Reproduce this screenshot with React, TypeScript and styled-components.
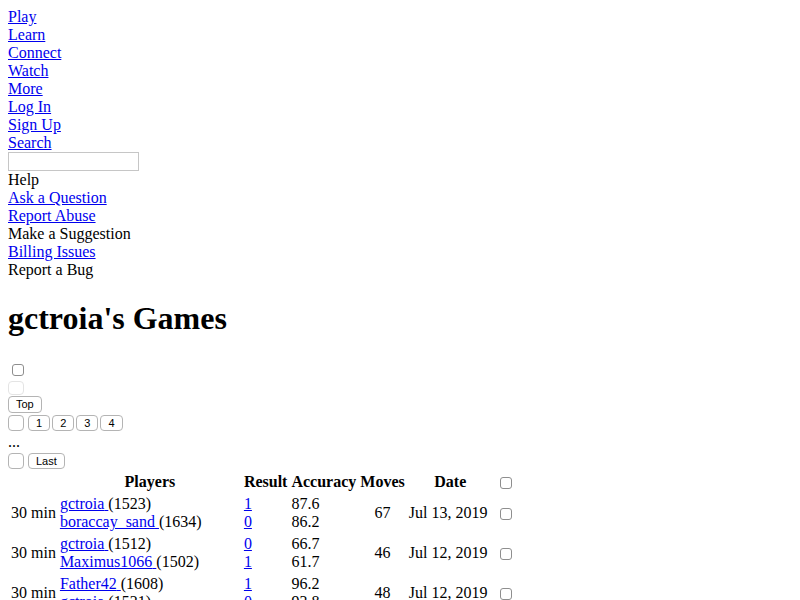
import React from "react";
import styled, { createGlobalStyle } from "styled-components";

const Global = createGlobalStyle`
  body {
    margin: 8px;
    font-family: "Liberation Serif", "Times New Roman", serif;
    font-size: 16px;
    color: #000;
    background: #fff;
  }
`;

const NavLink = styled.a`
  display: block;
  color: #0000ee;
  text-decoration: underline;
`;

const Line = styled.div``;

const SearchInput = styled.input`
  display: block;
  box-sizing: border-box;
  width: 131px;
  height: 19px;
  margin: 0;
  padding: 1px 2px;
  border: 1px solid #c6c6c6;
  background: #fff;
  outline: none;
`;

const Title = styled.h1`
  font-size: 32px;
  font-weight: bold;
  margin: 21px 0 21px;
`;

const Check = styled.input.attrs({ type: "checkbox" })`
  appearance: none;
  -webkit-appearance: none;
  box-sizing: border-box;
  width: 12px;
  height: 12px;
  margin: 0 3px 0 4px;
  border: 1px solid #8e8e8e;
  border-radius: 3px;
  background: #fff;
  vertical-align: middle;
`;

const Btn = styled.button<{ $empty?: boolean; $disabled?: boolean; $h?: number }>`
  box-sizing: border-box;
  font-family: "Liberation Sans", Arial, sans-serif;
  font-size: 11px;
  line-height: 13px;
  height: ${(p) => p.$h ?? 17}px;
  width: ${(p) => (p.$empty ? "16px" : "auto")};
  padding: ${(p) => (p.$empty ? "0" : "0 7px")};
  margin: 0;
  border: 1px solid ${(p) => (p.$disabled ? "#e4e4e4" : "#b4b4b4")};
  border-radius: 4px;
  background: #fff;
  color: #000;
`;

const Row = styled.div<{ $h: number; $top: number }>`
  display: flex;
  align-items: flex-start;
  box-sizing: border-box;
  height: ${(p) => p.$h}px;
  padding-top: ${(p) => p.$top}px;
  gap: 4px;
`;

const PageGroup = styled.div`
  display: flex;
  gap: 2px;
`;

const Table = styled.table`
  border-spacing: 2px;
  font-size: 16px;
`;

const Th = styled.th<{ $w?: number }>`
  padding: 1px;
  text-align: center;
  font-weight: bold;
  ${(p) => (p.$w ? `width: ${p.$w}px;` : "")}
`;

const Td = styled.td<{ $center?: boolean }>`
  padding: 1px;
  vertical-align: middle;
  text-align: ${(p) => (p.$center ? "center" : "left")};
  white-space: nowrap;
`;

const A = styled.a`
  color: #0000ee;
  text-decoration: underline;
`;

const navItems = ["Play", "Learn", "Connect", "Watch", "More", "Log In", "Sign Up", "Search"];

type Game = {
  p: [string, string, string, string];
  r: [string, string];
  acc: [string, string];
  moves: string;
  date: string;
};

const games: Game[] = [
  { p: ["gctroia", "1523", "boraccay_sand", "1634"], r: ["1", "0"], acc: ["87.6", "86.2"], moves: "67", date: "Jul 13, 2019" },
  { p: ["gctroia", "1512", "Maximus1066", "1502"], r: ["0", "1"], acc: ["66.7", "61.7"], moves: "46", date: "Jul 12, 2019" },
  { p: ["Father42", "1608", "gctroia", "1521"], r: ["1", "0"], acc: ["96.2", "93.8"], moves: "48", date: "Jul 12, 2019" },
];

export default function App() {
  return (
    <>
      <Global />
      {navItems.map((n) => (
        <NavLink key={n} href="#">
          {n}
        </NavLink>
      ))}
      <SearchInput type="text" />
      <Line>Help</Line>
      <NavLink href="#">Ask a Question</NavLink>
      <NavLink href="#">Report Abuse</NavLink>
      <Line>Make a Suggestion</Line>
      <NavLink href="#">Billing Issues</NavLink>
      <Line>Report a Bug</Line>
      <Title>gctroia's Games</Title>
      <Row $h={22} $top={6}>
        <Check />
      </Row>
      <Row $h={15} $top={1}>
        <Btn $empty $disabled $h={14} />
      </Row>
      <Row $h={19} $top={1}>
        <Btn>Top</Btn>
      </Row>
      <Row $h={19} $top={1}>
        <Btn $empty $h={16} />
        <PageGroup>
          <Btn $h={16}>1</Btn>
          <Btn $h={16}>2</Btn>
          <Btn $h={16}>3</Btn>
          <Btn $h={16}>4</Btn>
        </PageGroup>
      </Row>
      <Line>...</Line>
      <Row $h={19} $top={2}>
        <Btn $empty $h={16} />
        <Btn $h={16}>Last</Btn>
      </Row>
      <Table>
        <thead>
          <tr>
            <Th />
            <Th $w={180}>Players</Th>
            <Th>Result</Th>
            <Th>Accuracy</Th>
            <Th>Moves</Th>
            <Th $w={83}>Date</Th>
            <Th>
              <Check />
            </Th>
          </tr>
        </thead>
        <tbody>
          {games.map((g, i) => (
            <tr key={i}>
              <Td>30 min</Td>
              <Td>
                <A href="#">{g.p[0]} </A>({g.p[1]})
                <br />
                <A href="#">{g.p[2]} </A>({g.p[3]})
              </Td>
              <Td>
                <A href="#">{g.r[0]}</A>
                <br />
                <A href="#">{g.r[1]}</A>
              </Td>
              <Td>
                {g.acc[0]}
                <br />
                {g.acc[1]}
              </Td>
              <Td $center>{g.moves}</Td>
              <Td>{g.date}</Td>
              <Td>
                <Check />
              </Td>
            </tr>
          ))}
        </tbody>
      </Table>
    </>
  );
}
